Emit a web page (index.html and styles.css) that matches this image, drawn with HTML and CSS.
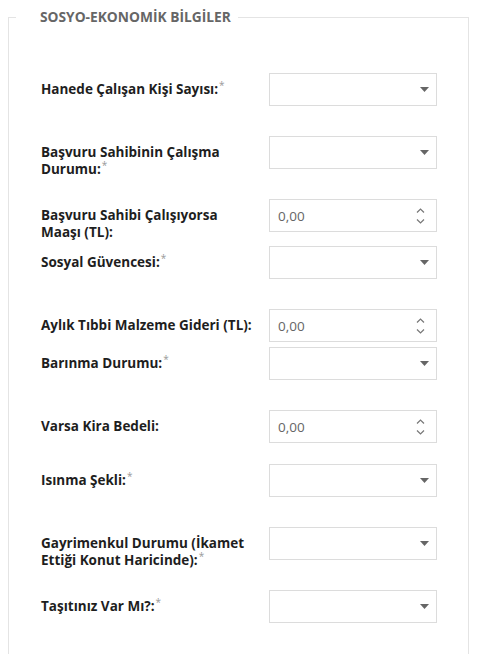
FILE: index.html
```html
<!DOCTYPE html>
<html lang="tr">
<head>
    <meta charset="UTF-8">
    <meta name="viewport" content="width=device-width, initial-scale=1.0">
    <title>Sosyo-Ekonomik Bilgiler</title>
    <link rel="stylesheet" href="styles.css">
</head>
<body>
    <form class="form">
        <fieldset class="panel">
            <legend class="panel-title">SOSYO-EKONOMİK BİLGİLER</legend>

            <div class="form-row">
                <label class="form-label" for="calisanSayisi">Hanede Çalışan Kişi Sayısı:<span class="req">*</span></label>
                <div class="field">
                    <select id="calisanSayisi" class="form-control"></select>
                    <svg class="caret" width="9" height="5" viewBox="0 0 9 5"><path d="M0 0h9L4.5 5z" fill="#666"/></svg>
                </div>
            </div>

            <div class="form-row">
                <label class="form-label" for="calismaDurumu">Başvuru Sahibinin Çalışma Durumu:<span class="req">*</span></label>
                <div class="field">
                    <select id="calismaDurumu" class="form-control"></select>
                    <svg class="caret" width="9" height="5" viewBox="0 0 9 5"><path d="M0 0h9L4.5 5z" fill="#666"/></svg>
                </div>
            </div>

            <div class="form-row close">
                <label class="form-label" for="maas">Başvuru Sahibi Çalışıyorsa Maaşı (TL):</label>
                <div class="field">
                    <input id="maas" class="form-control" type="text" value="0,00">
                    <svg class="spin" width="9" height="16" viewBox="0 0 9 16"><path d="M1 4.5L4.5 1 8 4.5M1 11.5L4.5 15 8 11.5" fill="none" stroke="#777" stroke-width="1.2"/></svg>
                </div>
            </div>

            <div class="form-row tight">
                <label class="form-label" for="sosyalGuvence">Sosyal Güvencesi:<span class="req">*</span></label>
                <div class="field">
                    <select id="sosyalGuvence" class="form-control"></select>
                    <svg class="caret" width="9" height="5" viewBox="0 0 9 5"><path d="M0 0h9L4.5 5z" fill="#666"/></svg>
                </div>
            </div>

            <div class="form-row">
                <label class="form-label" for="malzemeGideri">Aylık Tıbbi Malzeme Gideri (TL):</label>
                <div class="field">
                    <input id="malzemeGideri" class="form-control" type="text" value="0,00">
                    <svg class="spin" width="9" height="16" viewBox="0 0 9 16"><path d="M1 4.5L4.5 1 8 4.5M1 11.5L4.5 15 8 11.5" fill="none" stroke="#777" stroke-width="1.2"/></svg>
                </div>
            </div>

            <div class="form-row tight">
                <label class="form-label" for="barinma">Barınma Durumu:<span class="req">*</span></label>
                <div class="field">
                    <select id="barinma" class="form-control"></select>
                    <svg class="caret" width="9" height="5" viewBox="0 0 9 5"><path d="M0 0h9L4.5 5z" fill="#666"/></svg>
                </div>
            </div>

            <div class="form-row">
                <label class="form-label" for="kira">Varsa Kira Bedeli:</label>
                <div class="field">
                    <input id="kira" class="form-control" type="text" value="0,00">
                    <svg class="spin" width="9" height="16" viewBox="0 0 9 16"><path d="M1 4.5L4.5 1 8 4.5M1 11.5L4.5 15 8 11.5" fill="none" stroke="#777" stroke-width="1.2"/></svg>
                </div>
            </div>

            <div class="form-row close">
                <label class="form-label" for="isinma">Isınma Şekli:<span class="req">*</span></label>
                <div class="field">
                    <select id="isinma" class="form-control"></select>
                    <svg class="caret" width="9" height="5" viewBox="0 0 9 5"><path d="M0 0h9L4.5 5z" fill="#666"/></svg>
                </div>
            </div>

            <div class="form-row">
                <label class="form-label" for="gayrimenkul">Gayrimenkul Durumu (İkamet Ettiği Konut Haricinde):<span class="req">*</span></label>
                <div class="field">
                    <select id="gayrimenkul" class="form-control"></select>
                    <svg class="caret" width="9" height="5" viewBox="0 0 9 5"><path d="M0 0h9L4.5 5z" fill="#666"/></svg>
                </div>
            </div>

            <div class="form-row close">
                <label class="form-label" for="tasit">Taşıtınız Var Mı?:<span class="req">*</span></label>
                <div class="field">
                    <select id="tasit" class="form-control"></select>
                    <svg class="caret" width="9" height="5" viewBox="0 0 9 5"><path d="M0 0h9L4.5 5z" fill="#666"/></svg>
                </div>
            </div>
        </fieldset>
    </form>
</body>
</html>
```

FILE: styles.css
```css
/* General Styles */
body {
    font-family: "Open Sans", "Liberation Sans", sans-serif;
    background-color: #fff;
    color: #222;
    margin: 8px;
}

.form {
    margin: 0;
}

/* Panel */
.panel {
    border: 1px solid #e4e4e4;
    margin: 0;
    padding: 47px 0 60px 32px;
    min-width: 0;
}

.panel-title {
    padding: 0 6px 0 0;
    margin-left: 0;
    font-size: 13.75px;
    line-height: 18px;
    font-weight: 700;
    color: #666;
    background-color: #fff;
    position: relative;
    left: -1px;
    box-shadow: -24px 0 0 #fff;
}

/* Rows */
.form-row {
    display: flex;
    align-items: flex-start;
    margin-top: 30px;
}

.form-row:first-of-type {
    margin-top: 0;
}

.form-row.close {
    margin-top: 21px;
}

.form-row.tight {
    margin-top: 5px;
}

.form-label {
    flex: 0 0 214px;
    margin-right: 14px;
    padding-top: 8px;
    font-size: 13.5px;
    line-height: 17px;
    font-weight: 700;
    color: #1e1e1e;
}

.req {
    font-size: 10px;
    font-weight: 400;
    line-height: 0;
    color: #999;
    vertical-align: super;
    margin-left: 1px;
}

/* Fields */
.field {
    position: relative;
    width: 168px;
    height: 33px;
}

.form-control {
    display: block;
    width: 100%;
    height: 100%;
    box-sizing: border-box;
    margin: 0;
    padding: 0 24px 0 8px;
    border: 1px solid #dcdcdc;
    border-radius: 0;
    background-color: #fff;
    font-family: inherit;
    font-size: 13.5px;
    color: #666;
    appearance: none;
    -webkit-appearance: none;
    outline: none;
}

.caret {
    position: absolute;
    right: 8px;
    top: 14px;
    pointer-events: none;
}

.spin {
    position: absolute;
    right: 12px;
    top: 9px;
    pointer-events: none;
}
```
